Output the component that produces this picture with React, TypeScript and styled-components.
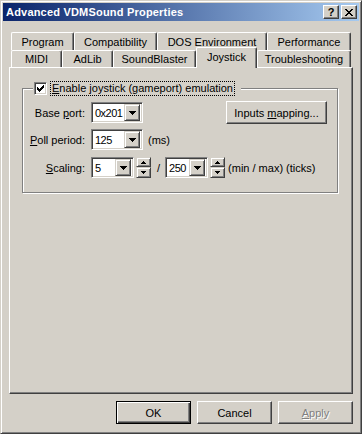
import React from "react";
import styled, { createGlobalStyle, css } from "styled-components";

const FACE = "#d4d0c8";
const SHADOW = "#808080";
const DARK = "#404040";

const GlobalStyle = createGlobalStyle`
  html, body {
    margin: 0;
    padding: 0;
    background: ${FACE};
  }
  body {
    font-family: "Liberation Sans", Arial, sans-serif;
    font-size: 11px;
    color: #000;
  }
`;

const raised = css`
  box-sizing: border-box;
  background: ${FACE};
  border: 1px solid;
  border-color: #fff ${DARK} ${DARK} #fff;
  box-shadow: inset -1px -1px 0 ${SHADOW};
`;

const sunken = css`
  box-sizing: border-box;
  background: #fff;
  border: 1px solid;
  border-color: ${SHADOW} #fff #fff ${SHADOW};
  box-shadow: inset 1px 1px 0 ${DARK}, inset -1px -1px 0 ${FACE};
`;

const Window = styled.div`
  width: 362px;
  height: 434px;
  box-sizing: border-box;
  background: ${FACE};
  border: 1px solid;
  border-color: ${FACE} ${DARK} ${DARK} ${FACE};
  box-shadow: inset 1px 1px 0 #fff, inset -1px -1px 0 ${SHADOW};
  padding: 2px;
  display: flex;
  flex-direction: column;
`;

const TitleBar = styled.div`
  height: 18px;
  flex: none;
  display: flex;
  align-items: center;
  padding: 0 2px 0 3px;
  background: linear-gradient(to right, #0a246a, #a6caf0);
`;

const Title = styled.div`
  flex: 1;
  color: #fff;
  font-weight: bold;
  font-size: 11px;
  letter-spacing: 0.2px;
  white-space: nowrap;
`;

const CaptionButton = styled.div`
  ${raised};
  width: 16px;
  height: 14px;
  display: flex;
  align-items: center;
  justify-content: center;
  font-weight: bold;
  font-size: 11px;
  line-height: 1;
  & + & {
    margin-left: 2px;
  }
`;

const Body = styled.div`
  flex: 1;
  display: flex;
  flex-direction: column;
  padding: 11px 6px 7px 6px;
`;

const TabRow = styled.div<{ $h: number }>`
  display: flex;
  align-items: flex-end;
  height: ${(p) => p.$h}px;
  padding: 0 2px;
`;

const Tab = styled.div<{ $w: number; $active?: boolean }>`
  width: ${(p) => p.$w}px;
  height: 100%;
  box-sizing: border-box;
  flex: none;
  background: ${FACE};
  border-left: 1px solid #fff;
  border-top: 1px solid #fff;
  border-right: 1px solid ${DARK};
  border-radius: 2px 2px 0 0;
  box-shadow: inset -1px 0 0 ${SHADOW};
  display: flex;
  align-items: center;
  justify-content: center;
  white-space: nowrap;

  ${(p) =>
    p.$active &&
    css`
      height: 21px;
      margin-bottom: -1px;
      padding-bottom: 3px;
      position: relative;
      z-index: 1;
    `}
`;

const Panel = styled.div`
  flex: 1;
  border: 1px solid;
  border-color: #fff ${DARK} ${DARK} #fff;
  box-shadow: inset -1px -1px 0 ${SHADOW};
`;

const GroupBox = styled.fieldset`
  margin: 13px 14px 0 12px;
  padding: 0;
  border: 1px solid ${SHADOW};
  box-shadow: inset 1px 1px 0 #fff, 1px 1px 0 #fff;
  min-width: 0;
`;

const GroupLegend = styled.legend`
  margin-left: 10px;
  padding: 0 6px 0 1px;
  height: 15px;
  display: flex;
  align-items: center;
  background: ${FACE};
`;

const CheckBox = styled.span`
  ${sunken};
  width: 13px;
  height: 13px;
  display: flex;
  align-items: center;
  justify-content: center;
  margin-right: 3px;
`;

const FocusLabel = styled.span`
  border: 1px dotted #000;
  padding: 0 1px;
  line-height: 13px;
  white-space: nowrap;
`;

const GroupBody = styled.div`
  padding: 6px 10px 14px 0;
  display: flex;
  flex-direction: column;
  gap: 6px;
`;

const FieldRow = styled.div`
  display: flex;
  align-items: center;
  height: 21px;
  & + & + & {
    margin-top: 1px;
  }
`;

const FieldLabel = styled.span`
  width: 62px;
  margin-right: 6px;
  text-align: right;
  white-space: nowrap;
`;

const Key = styled.span`
  text-decoration: underline;
`;

const Combo = styled.div<{ $w: number }>`
  ${sunken};
  width: ${(p) => p.$w}px;
  height: 21px;
  padding: 2px;
  display: flex;
  align-items: center;
  flex: none;
`;

const ComboValue = styled.span`
  flex: 1;
  padding-left: 1px;
  font-size: 11px;
  letter-spacing: -0.5px;
  overflow: hidden;
`;

const DropButton = styled.div`
  ${raised};
  border-color: ${FACE} ${DARK} ${DARK} ${FACE};
  box-shadow: inset 1px 1px 0 #fff, inset -1px -1px 0 ${SHADOW};
  width: 16px;
  height: 17px;
  flex: none;
  display: flex;
  align-items: center;
  justify-content: center;
`;

const Spinner = styled.div`
  width: 15px;
  height: 21px;
  margin-left: 2px;
  display: flex;
  flex-direction: column;
  flex: none;
`;

const SpinButton = styled.div<{ $h: number }>`
  ${raised};
  border-color: ${FACE} ${DARK} ${DARK} ${FACE};
  box-shadow: inset 1px 1px 0 #fff, inset -1px -1px 0 ${SHADOW};
  height: ${(p) => p.$h}px;
  display: flex;
  align-items: center;
  justify-content: center;
`;

const Slash = styled.span`
  margin: 0 5px 0 6px;
`;

const Hint = styled.span<{ $gap: number }>`
  margin-left: ${(p) => p.$gap}px;
  white-space: nowrap;
`;

const PushButton = styled.div<{ $w: number; $default?: boolean; $disabled?: boolean }>`
  ${raised};
  width: ${(p) => p.$w}px;
  height: 23px;
  display: flex;
  align-items: center;
  justify-content: center;
  flex: none;
  white-space: nowrap;

  ${(p) =>
    p.$default &&
    css`
      border-color: #000;
      box-shadow: inset 1px 1px 0 #fff, inset -1px -1px 0 ${DARK},
        inset -2px -2px 0 ${SHADOW};
    `}

  ${(p) =>
    p.$disabled &&
    css`
      color: ${SHADOW};
      text-shadow: 1px 1px 0 #fff;
    `}
`;

const MappingButton = styled(PushButton)`
  margin-left: auto;
`;

const ButtonRow = styled.div`
  display: flex;
  justify-content: flex-end;
  gap: 6px;
  margin-top: 7px;
`;

const DownArrow = () => (
  <svg width="7" height="4" viewBox="0 0 7 4" shapeRendering="crispEdges">
    <path d="M0 0h7v1h-7zM1 1h5v1h-5zM2 2h3v1h-3zM3 3h1v1h-1z" fill="#000" />
  </svg>
);

const SmallArrow = ({ up }: { up?: boolean }) => (
  <svg width="5" height="3" viewBox="0 0 5 3" shapeRendering="crispEdges">
    <path
      d={up ? "M2 0h1v1h-1zM1 1h3v1h-3zM0 2h5v1h-5z" : "M0 0h5v1h-5zM1 1h3v1h-3zM2 2h1v1h-1z"}
      fill="#000"
    />
  </svg>
);

const CloseGlyph = () => (
  <svg width="8" height="7" viewBox="0 0 8 7" shapeRendering="crispEdges">
    <path
      d="M0 0h2v1h-2zM6 0h2v1h-2zM1 1h2v1h-2zM5 1h2v1h-2zM2 2h4v1h-4zM3 3h2v1h-2zM2 4h4v1h-4zM1 5h2v1h-2zM5 5h2v1h-2zM0 6h2v1h-2zM6 6h2v1h-2z"
      fill="#000"
    />
  </svg>
);

// classic 7x7 tick, three pixels tall per column
const CheckGlyph = () => (
  <svg width="7" height="7" viewBox="0 0 7 7" shapeRendering="crispEdges">
    <path
      d="M0 2h1v3h-1zM1 3h1v3h-1zM2 4h1v3h-1zM3 3h1v3h-1zM4 2h1v3h-1zM5 1h1v3h-1zM6 0h1v3h-1z"
      fill="#000"
    />
  </svg>
);

const ComboBox = ({ value, width }: { value: string; width: number }) => (
  <Combo $w={width}>
    <ComboValue>{value}</ComboValue>
    <DropButton>
      <DownArrow />
    </DropButton>
  </Combo>
);

const UpDown = () => (
  <Spinner>
    <SpinButton $h={10}>
      <SmallArrow up />
    </SpinButton>
    <SpinButton $h={11}>
      <SmallArrow />
    </SpinButton>
  </Spinner>
);

const backTabs = [
  { label: "Program", w: 63 },
  { label: "Compatibility", w: 83 },
  { label: "DOS Environment", w: 110 },
  { label: "Performance", w: 84 },
];

const frontTabs = [
  { label: "MIDI", w: 51 },
  { label: "AdLib", w: 51 },
  { label: "SoundBlaster", w: 83 },
  { label: "Joystick", w: 61, active: true },
  { label: "Troubleshooting", w: 94 },
];

export default function App() {
  return (
    <>
      <GlobalStyle />
      <Window>
        <TitleBar>
          <Title>Advanced VDMSound Properties</Title>
          <CaptionButton>?</CaptionButton>
          <CaptionButton>
            <CloseGlyph />
          </CaptionButton>
        </TitleBar>

        <Body>
          <TabRow $h={18}>
            {backTabs.map((t) => (
              <Tab key={t.label} $w={t.w}>
                {t.label}
              </Tab>
            ))}
          </TabRow>
          <TabRow $h={17}>
            {frontTabs.map((t) => (
              <Tab key={t.label} $w={t.w} $active={t.active}>
                {t.label}
              </Tab>
            ))}
          </TabRow>

          <Panel>
            <GroupBox>
              <GroupLegend>
                <CheckBox>
                  <CheckGlyph />
                </CheckBox>
                <FocusLabel>
                  <Key>E</Key>nable joystick (gameport) emulation
                </FocusLabel>
              </GroupLegend>

              <GroupBody>
                <FieldRow>
                  <FieldLabel>
                    Base <Key>p</Key>ort:
                  </FieldLabel>
                  <ComboBox value="0x201" width={52} />
                  <MappingButton $w={101}>
                    <span>
                      Inputs <Key>m</Key>apping...
                    </span>
                  </MappingButton>
                </FieldRow>
                <FieldRow>
                  <FieldLabel>
                    <Key>P</Key>oll period:
                  </FieldLabel>
                  <ComboBox value="125" width={52} />
                  <Hint $gap={5}>(ms)</Hint>
                </FieldRow>
                <FieldRow>
                  <FieldLabel>
                    <Key>S</Key>caling:
                  </FieldLabel>
                  <ComboBox value="5" width={43} />
                  <UpDown />
                  <Slash>/</Slash>
                  <ComboBox value="250" width={43} />
                  <UpDown />
                  <Hint $gap={3}>(min / max) (ticks)</Hint>
                </FieldRow>
              </GroupBody>
            </GroupBox>
          </Panel>

          <ButtonRow>
            <PushButton $w={75} $default>
              OK
            </PushButton>
            <PushButton $w={75}>Cancel</PushButton>
            <PushButton $w={75} $disabled>
              <span>
                <Key>A</Key>pply
              </span>
            </PushButton>
          </ButtonRow>
        </Body>
      </Window>
    </>
  );
}
